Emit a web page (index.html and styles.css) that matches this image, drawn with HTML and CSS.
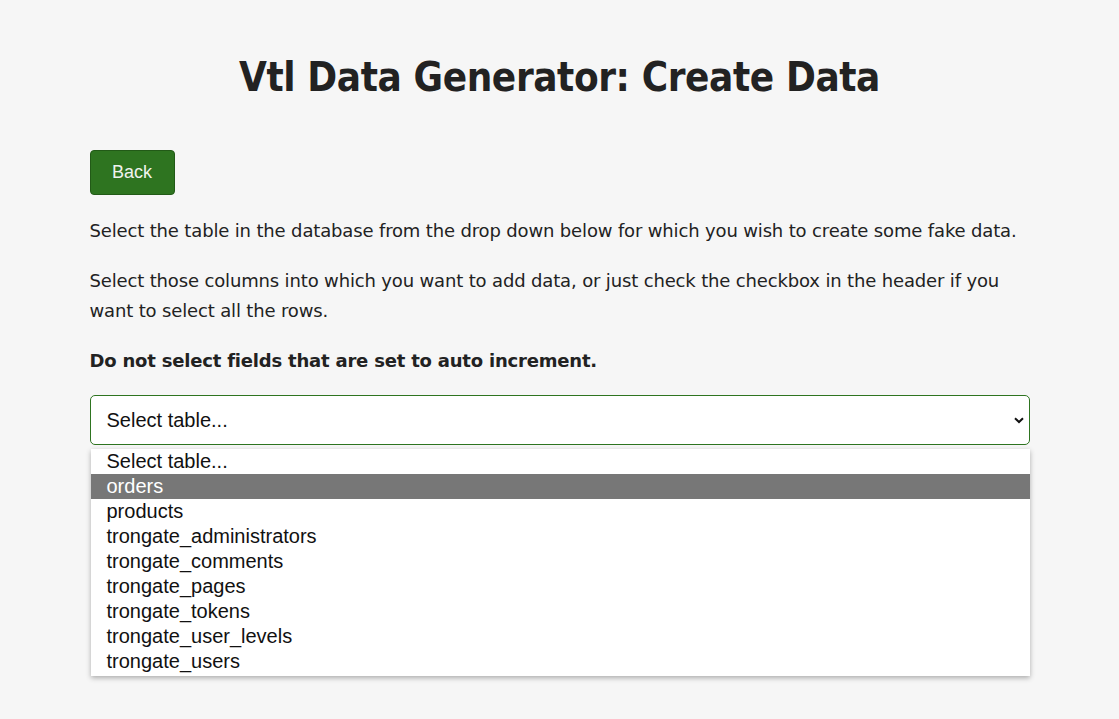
FILE: index.html
```html
<!DOCTYPE html>
<html lang="en">
<head>
<meta charset="utf-8">
<title>Vtl Data Generator: Create Data</title>
<link rel="stylesheet" href="styles.css">
</head>
<body>
<main class="container">
  <h1 class="title">Vtl Data Generator: Create Data</h1>
  <div class="actions"><button class="btn-back" type="button">Back</button></div>
  <p class="text">Select the table in the database from the drop down below for which you wish to create some fake data.</p>
  <p class="text">Select those columns into which you want to add data, or just check the checkbox in the header if you want to select all the rows.</p>
  <p class="text bold">Do not select fields that are set to auto increment.</p>
  <div class="select-wrap">
    <div class="select">
      <span>Select table...</span>
      <svg class="chev" width="10" height="7" viewBox="0 0 10 7"><path d="M1 1.2 L5 5 L9 1.2" fill="none" stroke="#111" stroke-width="2"/></svg>
    </div>
    <div class="menu">
      <div class="opt">Select table...</div>
      <div class="opt active">orders</div>
      <div class="opt">products</div>
      <div class="opt">trongate_administrators</div>
      <div class="opt">trongate_comments</div>
      <div class="opt">trongate_pages</div>
      <div class="opt">trongate_tokens</div>
      <div class="opt">trongate_user_levels</div>
      <div class="opt">trongate_users</div>
    </div>
  </div>
</main>
</body>
</html>
```
FILE: styles.css
```css
html, body {
  margin: 0;
  padding: 0;
  background: #f6f6f6;
}
body {
  font-family: Tahoma, "DejaVu Sans", sans-serif;
  color: #222;
}
.container {
  width: 940px;
  margin: 0 auto;
  padding: 52px 0 40px;
}
.title {
  margin: 0;
  text-align: center;
  font-family: Tahoma, "DejaVu Sans Condensed", "DejaVu Sans", sans-serif;
  font-weight: bold;
  font-size: 40px;
  line-height: 50px;
  letter-spacing: -0.4px;
  color: #222;
}
.actions {
  margin-top: 48px;
}
.btn-back {
  width: 85px;
  height: 45px;
  background: #2e7420;
  border: 1px solid #225a17;
  border-radius: 4px;
  color: #f0f3ee;
  font-family: "Liberation Sans", Arial, sans-serif;
  font-size: 18px;
  padding: 0;
}
.text {
  margin: 21px 0 0;
  font-size: 18px;
  line-height: 30px;
  letter-spacing: -0.15px;
}
.text + .text {
  margin-top: 20px;
}
.bold {
  font-weight: bold;
  letter-spacing: -0.2px;
}
.select-wrap {
  margin-top: 19px;
}
.select {
  box-sizing: border-box;
  height: 50px;
  border: 1px solid #2e7420;
  border-radius: 5px;
  background: #fff;
  display: flex;
  align-items: center;
  justify-content: space-between;
  padding: 0 5px 0 16px;
  font-family: "Liberation Sans", Arial, sans-serif;
  font-size: 20px;
  color: #111;
}
.menu {
  margin: 4px 0 0 1px;
  padding: 0 0 2px;
  background: #fff;
  box-shadow: 0 2px 5px rgba(0,0,0,0.3);
  font-family: "Liberation Sans", Arial, sans-serif;
  font-size: 20px;
  color: #111;
}
.opt {
  height: 25px;
  line-height: 25px;
  padding-left: 16px;
}
.opt.active {
  background: #777;
  color: #fff;
}
```
